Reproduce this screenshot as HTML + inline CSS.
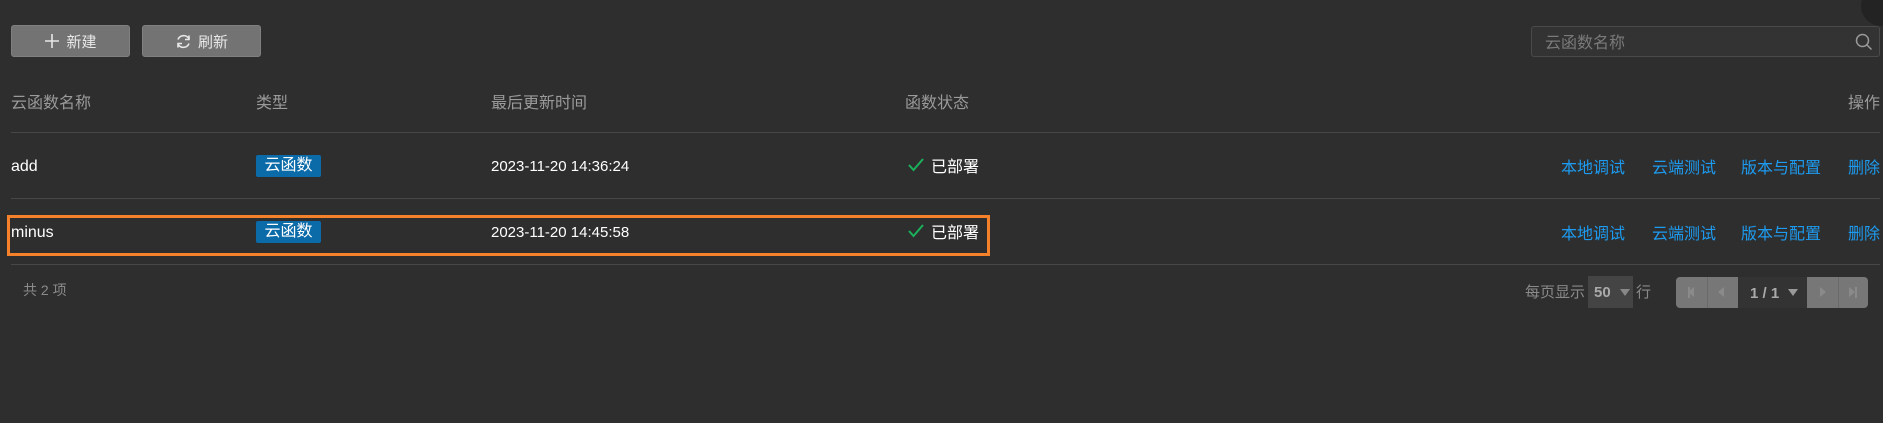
<!DOCTYPE html>
<html><head><meta charset="utf-8"><style>
*{margin:0;padding:0;box-sizing:border-box}
body{width:1883px;height:423px;background:#2e2e2e;position:relative;overflow:hidden;font-family:"Liberation Sans","Noto Sans CJK SC",sans-serif;color:#fff}
.a{position:absolute;white-space:nowrap}
.btn{position:absolute;top:25px;height:32px;width:119px;background:#737373;border-radius:3px;border:1px solid #808080;color:#e8e8e8;font-size:15px;display:flex;align-items:center;justify-content:center;gap:6px}
.hd{position:absolute;top:89px;font-size:16px;color:#9a9a9a}
.line{position:absolute;left:11px;width:1869px;height:1px;background:#474747}
.r{font-size:15px;color:#fff}
.tag{position:absolute;width:65px;height:22px;background:#0b6aa8;border-radius:2px;color:#fff;font-size:16px;text-align:center;line-height:22px}
.lk{position:absolute;font-size:16px;color:#1d9bf0}
.ck{position:absolute;width:16px;height:14px}
</style></head><body>
<div style="position:absolute;right:-18px;top:-14px;width:40px;height:40px;border-radius:50%;background:#232323"></div>
<div class="btn" style="left:11px"><svg width="16" height="16" viewBox="0 0 16 16"><path d="M8 1v14M1 8h14" stroke="#e8e8e8" stroke-width="1.6"/></svg>新建</div>
<div class="btn" style="left:142px"><svg width="17" height="17" viewBox="0 0 17 17" fill="none" stroke="#e8e8e8" stroke-width="1.6"><path d="M3 6.5A6 6 0 0 1 14 6"/><path d="M14 10.5A6 6 0 0 1 3 11"/><path d="M14 2.5v4h-4" /><path d="M3 14.5v-4h4"/></svg>刷新</div>
<div style="position:absolute;left:1531px;top:26px;width:349px;height:31px;border:1px solid #4a4a4a;border-radius:3px;background:#333"></div>
<div class="a" style="left:1545px;top:29px;font-size:16px;color:#7a7a7a">云函数名称</div>
<svg style="position:absolute;left:1855px;top:33px" width="18" height="18" viewBox="0 0 18 18" fill="none" stroke="#999" stroke-width="1.5"><circle cx="7.5" cy="7.5" r="6"/><path d="M12 12l4.5 4.5"/></svg>
<div class="hd" style="left:11px">云函数名称</div>
<div class="hd" style="left:256px">类型</div>
<div class="hd" style="left:491px">最后更新时间</div>
<div class="hd" style="left:905px">函数状态</div>
<div class="hd" style="left:1848px">操作</div>
<div class="line" style="top:132px"></div>
<div class="line" style="top:198px"></div>
<div class="line" style="top:264px"></div>
<div class="a r" style="left:11px;top:158px;font-size:16px">add</div>
<div class="tag" style="left:256px;top:155px">云函数</div>
<div class="a r" style="left:491px;top:158px">2023-11-20 14:36:24</div>
<svg class="ck" style="left:908px;top:158px" viewBox="0 0 16 14"><path d="M1 7l4.5 5L15 1" stroke="#1bb15a" stroke-width="2" fill="none"/></svg>
<div class="a r" style="left:931px;top:153px;font-size:16px">已部署</div>
<div class="a r" style="left:11px;top:224px;font-size:16px">minus</div>
<div class="tag" style="left:256px;top:221px">云函数</div>
<div class="a r" style="left:491px;top:224px">2023-11-20 14:45:58</div>
<svg class="ck" style="left:908px;top:224px" viewBox="0 0 16 14"><path d="M1 7l4.5 5L15 1" stroke="#1bb15a" stroke-width="2" fill="none"/></svg>
<div class="a r" style="left:931px;top:219px;font-size:16px">已部署</div>
<div style="position:absolute;left:7px;top:215px;width:983px;height:41px;border:3px solid #f5822a"></div>
<div class="lk" style="left:1561px;top:154px">本地调试</div><div class="lk" style="left:1652px;top:154px">云端测试</div><div class="lk" style="left:1741px;top:154px">版本与配置</div><div class="lk" style="left:1848px;top:154px">删除</div>
<div class="lk" style="left:1561px;top:220px">本地调试</div><div class="lk" style="left:1652px;top:220px">云端测试</div><div class="lk" style="left:1741px;top:220px">版本与配置</div><div class="lk" style="left:1848px;top:220px">删除</div>
<div class="a" style="left:23px;top:280px;font-size:14px;color:#8a8a8a">共 2 项</div>
<div class="a" style="left:1525px;top:281px;font-size:15px;color:#8a8a8a">每页显示</div>
<div style="position:absolute;left:1588px;top:276px;width:45px;height:32px;background:#444"></div>
<div class="a" style="left:1594px;top:284px;font-size:15px;font-weight:bold;color:#aaa">50</div>
<div style="position:absolute;left:1620px;top:289px;border:5px solid transparent;border-top:7px solid #888"></div>
<div class="a" style="left:1636px;top:281px;font-size:15px;color:#8a8a8a">行</div>
<div style="position:absolute;left:1676px;top:277px;width:192px;height:31px;border-radius:4px;background:#777;overflow:hidden">
<div style="position:absolute;left:31px;top:0;width:1px;height:31px;background:#6a6a6a"></div>
<div style="position:absolute;left:62px;top:0;width:69px;height:31px;background:#333"></div>
<div style="position:absolute;left:162px;top:0;width:1px;height:31px;background:#6a6a6a"></div>
<div class="a" style="left:74px;top:8px;font-size:15px;font-weight:bold;color:#aaa">1 / 1</div>
<div style="position:absolute;left:112px;top:12px;border:5px solid transparent;border-top:7px solid #999"></div>
<div style="position:absolute;left:12px;top:10px;width:2px;height:11px;background:#8a8a8a"></div>
<div style="position:absolute;left:12px;top:10px;border:5.5px solid transparent;border-right:6px solid #8a8a8a;border-left:0"></div>
<div style="position:absolute;left:42px;top:10px;border:5.5px solid transparent;border-right:6px solid #8a8a8a;border-left:0"></div>
<div style="position:absolute;left:144px;top:10px;border:5.5px solid transparent;border-left:6px solid #8a8a8a;border-right:0"></div>
<div style="position:absolute;left:173px;top:10px;border:5.5px solid transparent;border-left:6px solid #8a8a8a;border-right:0"></div>
<div style="position:absolute;left:179px;top:10px;width:2px;height:11px;background:#8a8a8a"></div>
</div>
</body></html>
